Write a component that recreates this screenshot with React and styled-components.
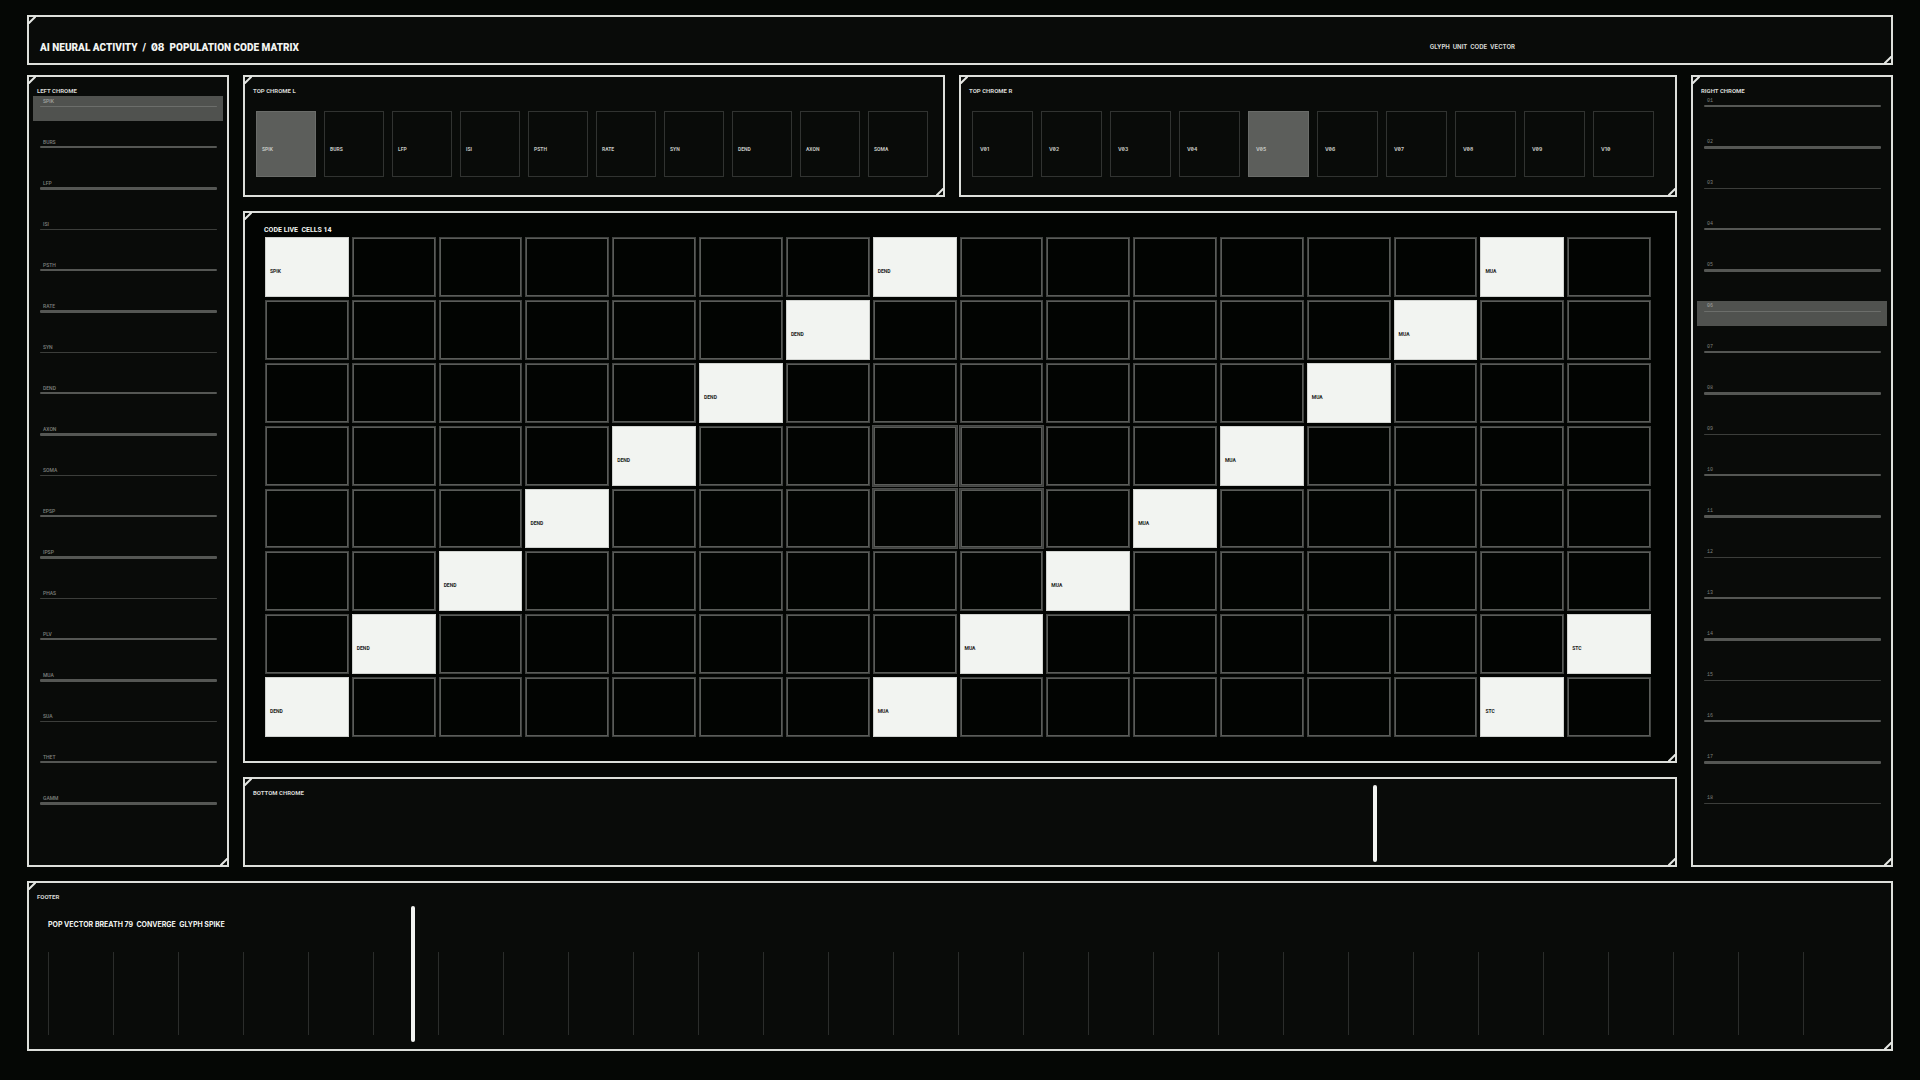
import React from "react";
import styled, { createGlobalStyle, css } from "styled-components";

const Global = createGlobalStyle`
  * { box-sizing: border-box; }
  body {
    margin: 0;
    background: #050705;
    color: #f2f4f1;
    font-family: Roboto, "Liberation Sans", sans-serif;
  }
`;

const Page = styled.div`
  min-height: 100vh;
  padding: 15px 27px 29px;
  display: flex;
  flex-direction: column;
`;

const Panel = styled.section`
  position: relative;
  display: flex;
  flex-direction: column;
  min-width: 0;
  border: 2px solid #dddfdb;
  background: ${(p) => (p.$deep ? "#020402" : "#090b09")};
`;

const CornerSvg = styled.svg`
  position: absolute;
  width: 8px;
  height: 8px;
  fill: none;
  stroke: #e6e8e4;
  stroke-width: 2;
  ${(p) => (p.$end ? css`right: -1px; bottom: -1px;` : css`left: -1px; top: -1px;`)}
`;

const Corners = () => (
  <>
    <CornerSvg viewBox="0 0 8 8" aria-hidden="true"><path d="M0 8L8 0" /></CornerSvg>
    <CornerSvg $end viewBox="0 0 8 8" aria-hidden="true"><path d="M0 8L8 0" /></CornerSvg>
  </>
);

const Header = styled(Panel).attrs({ as: "header" })`
  height: 50px;
  padding: 14px 376px 0 11px;
  flex-direction: row;
  align-items: center;
  justify-content: space-between;
`;

const Title = styled.h1`
  margin: 0;
  font-size: 10px;
  line-height: 16px;
  font-weight: 900;
  white-space: pre;
`;

const Digits = styled.span`
  font-family: Inter, sans-serif;
  font-feature-settings: "zero" 1;
  font-weight: 800;
`;

const Note = styled.p`
  margin: 0;
  font-family: Inter, sans-serif;
  font-size: 6px;
  line-height: 8px;
  font-weight: 700;
  white-space: pre;
  color: #d5d7d3;
`;

const PanelTitle = styled.h2`
  margin: 0;
  padding: 10px 8px 0;
  font-size: 6px;
  line-height: 8px;
  font-weight: 700;
  white-space: pre;
  color: #d5d7d3;
`;

const Body = styled.main`
  flex: 1;
  display: grid;
  grid-template-columns: 202px minmax(0, 1fr) 202px;
  gap: 14px;
  margin: 10px 0 14px;
`;

const Center = styled.div`
  display: grid;
  grid-template-rows: 122px 1fr 90px;
  gap: 14px;
  min-width: 0;
`;

const TopRow = styled.div`
  display: grid;
  grid-template-columns: 702fr 718fr;
  gap: 14px;
`;

const List = styled.ol`
  list-style: none;
  margin: 1px 4px 0;
  padding: 0;
  display: grid;
  gap: 16px;
`;

const Item = styled.li`
  height: 25px;
  padding: 1px 6px 0 7px;
  color: ${(p) => (p.$active ? "#a3a5a2" : "#7f817e")};
  background: ${(p) => (p.$active ? "#50524f" : "transparent")};
`;

const ItemLabel = styled.span`
  display: block;
  padding-left: 3px;
  font-family: ${(p) => (p.$mono ? '"Liberation Mono", monospace' : "inherit")};
  font-size: 5px;
  line-height: 8px;
  font-weight: 500;
`;

const Rule = styled.span`
  display: block;
  height: 3px;
  padding-top: ${(p) => (p.$weight === 1 ? 1 : 0)}px;
  &::before {
    content: "";
    display: block;
    height: ${(p) => p.$weight}px;
    border-radius: 1px;
    background: ${(p) => (p.$active ? "#6c6e6b" : p.$weight === 1 ? "#3c3e3b" : "#555754")};
  }
`;

const Chips = styled.div`
  display: grid;
  grid-template-columns: repeat(10, minmax(0, 1fr));
  gap: 8px;
  margin: 16px ${(p) => p.$end}px 0 11px;
`;

const Chip = styled.button`
  height: 66px;
  padding: 10px 0 0 ${(p) => p.$inset}px;
  border: 1px solid ${(p) => (p.$active ? "#6a6c69" : "#313331")};
  border-radius: 0;
  background: ${(p) => (p.$active ? "#5c5e5b" : "transparent")};
  color: #c4c6c2;
  font-family: ${(p) => (p.$numeric ? "Inter, sans-serif" : "inherit")};
  font-feature-settings: "zero" 1;
  font-size: 5px;
  line-height: 8px;
  font-weight: 700;
  text-align: left;
`;

const MatrixTitle = styled.h2`
  margin: 0;
  padding: 12px 19px 0;
  font-size: 7px;
  line-height: 10px;
  font-weight: 700;
  white-space: pre;
`;

const Matrix = styled.div`
  flex: 1;
  display: grid;
  grid-template-columns: repeat(16, minmax(0, 1fr));
  grid-template-rows: repeat(8, minmax(0, 1fr));
  gap: 3px;
  margin: 2px 24px 24px 20px;
`;

const Cell = styled.div`
  padding: 29px 0 0 4px;
  border: 1px solid #414341;
  box-shadow: inset 0 0 0 1px #5a5c59 ${(p) => (p.$focus ? ", 0 0 0 1px #4a4c4a" : "")};
  font-size: 5px;
  line-height: 8px;
  font-weight: 700;
  color: #1a1c1a;
  ${(p) =>
    p.$live &&
    css`
      border-color: #d0d2cf;
      background: #f2f4f1;
      box-shadow: none;
    `}
`;

const Playhead = styled.span`
  position: absolute;
  left: ${(p) => p.$at}%;
  top: ${(p) => p.$top}px;
  bottom: ${(p) => p.$bottom}px;
  width: 4px;
  border-radius: 2px;
  background: #f2f4f1;
`;

const Footer = styled(Panel).attrs({ as: "footer" })`
  height: 170px;
`;

const FooterText = styled.p`
  margin: 0;
  padding: 18px 19px 0;
  font-family: Inter, sans-serif;
  font-size: 7px;
  line-height: 12px;
  font-weight: 700;
  white-space: pre;
`;

const Ticks = styled.div`
  display: flex;
  justify-content: space-between;
  height: 83px;
  margin: 21px 87px 0 19px;
`;

const Tick = styled.span`
  width: 1px;
  background: #2b2d2b;
`;

const units = [
  "SPIK", "BURS", "LFP", "ISI", "PSTH", "RATE", "SYN", "DEND", "AXON",
  "SOMA", "EPSP", "IPSP", "PHAS", "PLV", "MUA", "SUA", "THET", "GAMM",
];
const indexes = units.map((_, i) => String(i + 1).padStart(2, "0"));
const vectors = indexes.slice(0, 10).map((n) => "V" + n);
const diagonals = ["SPIK", "DEND", "MUA", "STC"];

const SideList = ({ items, active, phase, mono }) => (
  <List>
    {items.map((label, i) => (
      <Item key={label} $active={i === active}>
        <ItemLabel $mono={mono}>{label}</ItemLabel>
        <Rule $weight={((i + phase) % 3) + 1} $active={i === active} />
      </Item>
    ))}
  </List>
);

const ChipStrip = ({ items, active, inset, end, numeric }) => (
  <Chips $end={end}>
    {items.map((label, i) => (
      <Chip
        key={label}
        type="button"
        aria-pressed={i === active}
        $active={i === active}
        $inset={inset}
        $numeric={numeric}
      >
        {label}
      </Chip>
    ))}
  </Chips>
);

const cells = Array.from({ length: 128 }, (_, i) => {
  const row = Math.floor(i / 16);
  const col = i % 16;
  const live = (row + col) % 7 === 0;
  return {
    key: i,
    live,
    label: live ? diagonals[(row + col) / 7] : "",
    focus: (row === 3 || row === 4) && (col === 7 || col === 8),
  };
});

export default function App() {
  return (
    <>
      <Global />
      <Page>
        <Header>
          <Corners />
          <Title>
            {"AI NEURAL ACTIVITY  /  "}
            <Digits>08</Digits>
            {"  POPULATION CODE MATRIX"}
          </Title>
          <Note>{"GLYPH  UNIT  CODE  VECTOR"}</Note>
        </Header>
        <Body>
          <Panel>
            <Corners />
            <PanelTitle>LEFT CHROME</PanelTitle>
            <SideList items={units} active={0} phase={0} />
          </Panel>
          <Center>
            <TopRow>
              <Panel>
                <Corners />
                <PanelTitle>TOP CHROME L</PanelTitle>
                <ChipStrip items={units.slice(0, 10)} active={0} inset={5} end={15} />
              </Panel>
              <Panel>
                <Corners />
                <PanelTitle>TOP CHROME R</PanelTitle>
                <ChipStrip items={vectors} active={4} inset={7} end={21} numeric />
              </Panel>
            </TopRow>
            <Panel $deep>
              <Corners />
              <MatrixTitle>{"CODE LIVE  CELLS 14"}</MatrixTitle>
              <Matrix>
                {cells.map((c) => (
                  <Cell key={c.key} $live={c.live} $focus={c.focus}>{c.label}</Cell>
                ))}
              </Matrix>
            </Panel>
            <Panel>
              <Corners />
              <PanelTitle>BOTTOM CHROME</PanelTitle>
              <Playhead $at={78.9} $top={6} $bottom={3} />
            </Panel>
          </Center>
          <Panel>
            <Corners />
            <PanelTitle>RIGHT CHROME</PanelTitle>
            <SideList items={indexes} active={5} phase={1} mono />
          </Panel>
        </Body>
        <Footer>
          <Corners />
          <PanelTitle>FOOTER</PanelTitle>
          <FooterText>{"POP VECTOR BREATH 79  CONVERGE  GLYPH SPIKE"}</FooterText>
          <Ticks>
            {Array.from({ length: 28 }, (_, i) => <Tick key={i} />)}
          </Ticks>
          <Playhead $at={20.5} $top={23} $bottom={7} />
        </Footer>
      </Page>
    </>
  );
}
